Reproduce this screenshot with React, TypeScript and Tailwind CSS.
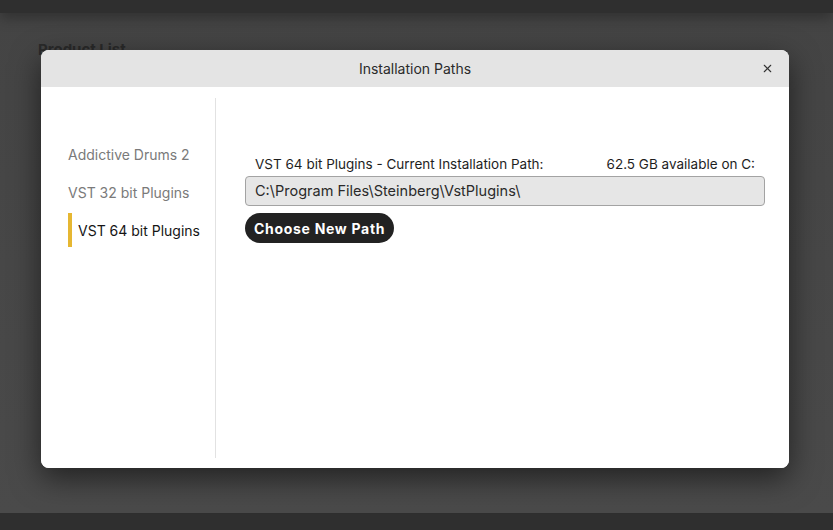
import { X } from "lucide-react"

const items = ["Addictive Drums 2", "VST 32 bit Plugins", "VST 64 bit Plugins"]

const App = () => {
  const selected = 2
  return (
    <div
      className="flex flex-col h-[530px] w-full bg-[#4a4a4a] overflow-hidden"
      style={{ fontFamily: "Inter, 'Noto Sans', sans-serif" }}
    >
      <div className="h-[13px] bg-[#2f2f2f] shadow-[0_4px_14px_rgba(0,0,0,0.35)] z-10" />
      <main className="relative flex-1 bg-gradient-to-b from-[#444] to-[#4a4a4a]">
        <h1 className="ml-[38px] mt-[26px] text-[15px] font-bold text-[#2a2a2a]">Product List</h1>

        {/* modal */}
        <div className="absolute left-[41px] top-[37px] w-[748px] h-[418px] flex flex-col rounded-lg bg-white shadow-[0_10px_30px_rgba(0,0,0,0.55)]">
          <div className="relative h-[37px] flex items-center justify-center rounded-t-lg bg-[#e4e4e4]">
            <span className="text-[14px] text-[#2b2b2b]">Installation Paths</span>
            <X className="absolute right-[15px] w-[13px] h-[13px] text-[#333]" strokeWidth={2} />
          </div>
          <div className="flex flex-1 rounded-b-lg bg-white">
            <nav className="w-[175px] mt-[11px] mb-[10px] pt-[39px] pl-[27px] flex flex-col gap-[4px] border-r border-[#e2e2e2]">
              {items.map((it, i) =>
                i === selected ? (
                  <div key={it} className="h-[34px] flex items-center gap-[6px]">
                    <span className="w-[4px] h-[34px] bg-[#e6b732]" />
                    <span className="text-[14px] text-[#151515]">{it}</span>
                  </div>
                ) : (
                  <div key={it} className="h-[34px] flex items-center text-[14px] text-[#7a7a7a]">
                    {it}
                  </div>
                )
              )}
            </nav>
            <section className="flex-1 pl-[29px] pr-[24px] pt-[68px]">
              <div className="flex justify-between px-[10px] h-[18px] items-center text-[13.5px] text-[#1e1e1e]">
                <span>VST 64 bit Plugins - Current Installation Path:</span>
                <span>62.5 GB available on C:</span>
              </div>
              <div className="mt-[3px] h-[30px] flex items-center px-[9px] rounded-[4px] border border-[#a3a3a3] bg-[#e6e6e6] text-[14.5px] text-[#2a2a2a]">
                C:\Program Files\Steinberg\VstPlugins\
              </div>
              <button className="mt-[7px] h-[30px] px-[9px] rounded-full bg-[#222] text-white text-[14px] font-bold tracking-[0.05em]">
                Choose New Path
              </button>
            </section>
          </div>
        </div>
      </main>
      <div className="h-[17px] bg-[#2f2f2f]" />
    </div>
  )
}

export default App
